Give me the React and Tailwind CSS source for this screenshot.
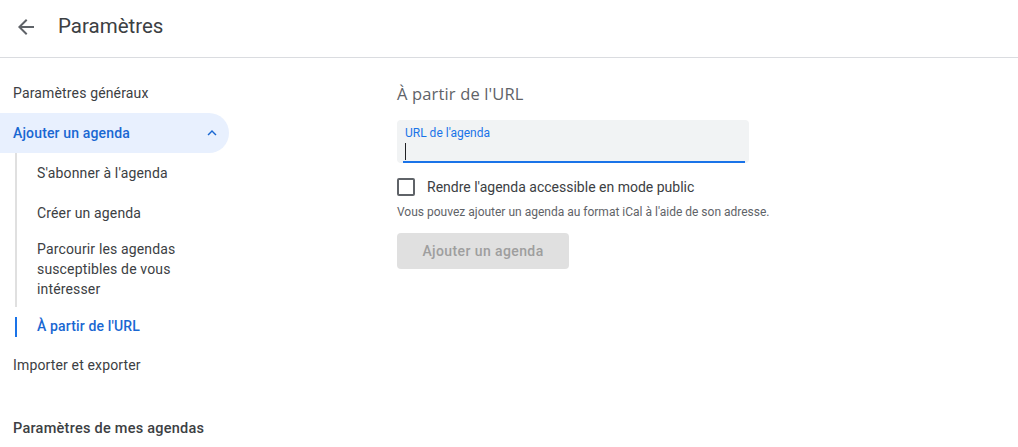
import React from "react";

const font = { fontFamily: "Roboto, Arial, sans-serif" };

export default function App() {
  return (
    <div className="w-[1018px] h-[447px] bg-white overflow-hidden text-[#3c4043]" style={font}>
      {/* Header */}
      <div className="h-[58px] border-b border-[#dadce0] flex items-center">
        <div className="w-[50px] h-[50px] flex items-center justify-center -mt-[4px]">
          <svg width="24" height="24" viewBox="0 0 24 24" className="ml-[1px]">
            <path d="M20 11H7.83l5.59-5.59L12 4l-8 8 8 8 1.41-1.41L7.83 13H20v-2z" fill="#5f6368" />
          </svg>
        </div>
        <div className="ml-[8px] -mt-[5px] text-[20.5px] text-[#3c4043]">
          Paramètres
        </div>
      </div>

      <div className="flex">
        {/* Sidebar */}
        <div className="w-[256px] shrink-0 pt-[15px] text-[14px] tracking-[0.15px]">
          <div className="h-[40px] flex items-center pl-[13px]">Paramètres généraux</div>
          <div className="h-[40px] w-[229px] flex items-center justify-between pl-[13px] pr-[8px] bg-[#e8f0fe] rounded-r-full text-[#1967d2] font-medium">
            <span>Ajouter un agenda</span>
            <svg width="18" height="18" viewBox="0 0 24 24">
              <path d="M7.41 15.41L12 10.83l4.59 4.58L18 14l-6-6-6 6z" fill="#1967d2" />
            </svg>
          </div>
          <div className="ml-[15px]">
            <div className="border-l-2 border-[#e0e0e0]">
              <div className="h-[40px] flex items-center pl-[20px]">S'abonner à l'agenda</div>
              <div className="h-[40px] flex items-center pl-[20px]">Créer un agenda</div>
              <div className="pl-[20px] pt-[6px] pb-[8px] leading-[20px]">
                Parcourir les agendas<br />susceptibles de vous<br />intéresser
              </div>
            </div>
            <div className="h-[38px] flex items-center">
              <div className="w-[2px] h-[20px] bg-[#1a73e8] mt-[2px]"></div>
              <span className="pl-[20px] text-[#1967d2] font-medium">À partir de l'URL</span>
            </div>
          </div>
          <div className="h-[40px] flex items-center pl-[13px]">Importer et exporter</div>
          <div className="h-[40px] mt-[24px] flex items-center pl-[13px] font-medium text-[#3c4043] text-[14.5px] tracking-[0.25px]">Paramètres de mes agendas</div>
        </div>

        {/* Main */}
        <div className="pl-[141px] pt-[24px]">
          <div className="text-[16.5px] leading-[24px] text-[#5f6368] tracking-[0.15px]" style={{ fontFamily: "'Open Sans', Roboto, sans-serif" }}>
            À partir de l'URL
          </div>
          <div className="mt-[14px] w-[352px] h-[43px] bg-[#f1f3f4] rounded-[4px] relative">
            <div className="absolute left-[8px] top-[6px] text-[12px] leading-[14px] text-[#1a73e8]">URL de l'agenda</div>
            <div className="absolute left-[8px] top-[23px] w-[1px] h-[17px] bg-[#202124]"></div>
            <div className="absolute left-[6px] right-[4px] bottom-0 h-[2px] bg-[#1a73e8]"></div>
          </div>
          <div className="mt-[15px] flex items-center h-[18px]">
            <div className="w-[18px] h-[18px] border-2 border-[#5f6368] rounded-[2px] box-border"></div>
            <span className="ml-[12px] text-[14px] text-[#3c4043]">Rendre l'agenda accessible en mode public</span>
          </div>
          <div className="mt-[8px] text-[12px] leading-[16px] text-[#5f6368]">
            Vous pouvez ajouter un agenda au format iCal à l'aide de son adresse.
          </div>
          <div className="mt-[13px] w-[172px] h-[36px] rounded-[4px] bg-[#e0e0e0] flex items-center justify-center text-[14px] font-medium text-[#9e9e9e] tracking-[0.4px]">
            Ajouter un agenda
          </div>
        </div>
      </div>
    </div>
  );
}
